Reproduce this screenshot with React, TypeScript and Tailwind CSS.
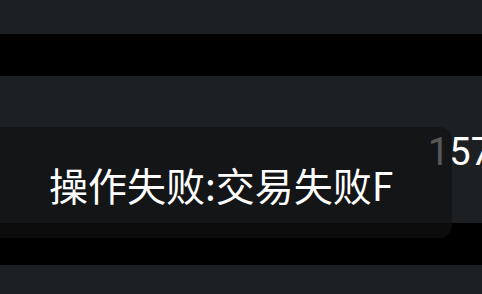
export default function App() {
  return (
    <div className="relative h-[294px] w-[482px] overflow-hidden bg-black">
      <div className="h-[34px] bg-[#1d2023]" />
      <div className="mt-[42px] h-[147px] bg-[#1d2023] pl-[428px] pt-[54px]">
        <span className="whitespace-nowrap font-['Roboto',sans-serif] text-[38px] leading-[44px] text-white">
          1573
        </span>
      </div>
      <div className="mt-[42px] h-[29px] bg-[#1d2023]" />

      <div className="absolute left-[-40px] top-[127px] flex h-[111px] w-[492px] items-center rounded-[13px] bg-[rgba(17,17,18,0.7)] pl-[89px] pt-[4px]">
        <span className="whitespace-nowrap font-['Noto_Sans_CJK_SC',sans-serif] text-[39px] leading-none text-white">
          操作失败:交易失败F
        </span>
      </div>
    </div>
  )
}
